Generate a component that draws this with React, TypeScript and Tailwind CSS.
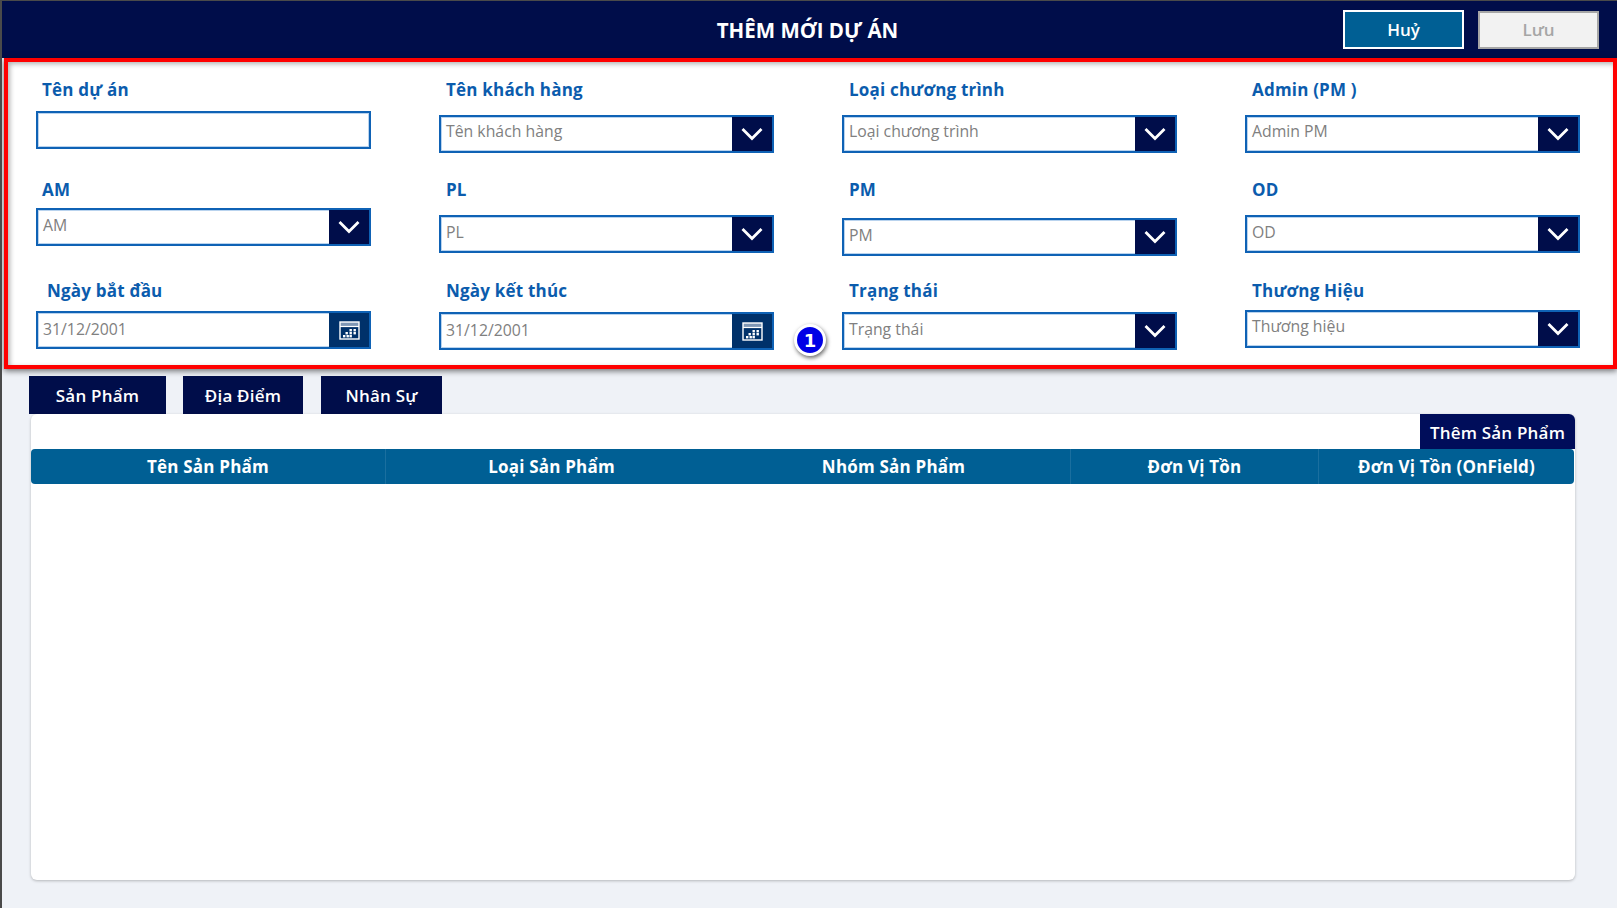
const font = { fontFamily: '"Open Sans", "Noto Sans", sans-serif' };

function Chevron() {
  return (
    <svg width="24" height="16" viewBox="0 0 24 16" fill="none">
      <path d="M2.5 3 L12 12.5 L21.5 3" stroke="white" strokeWidth="2.8" />
    </svg>
  );
}

function Calendar() {
  return (
    <svg width="21" height="19" viewBox="0 0 21 19" fill="none">
      <rect x="1" y="1" width="19" height="4.5" fill="#7f97b5" />
      <rect x="1" y="1" width="19" height="17" stroke="white" strokeWidth="1.4" />
      <path d="M1 5.5 H20" stroke="white" strokeWidth="1.2" />
      <g fill="white">
        <rect x="10.5" y="8" width="2.4" height="2.4" />
        <rect x="14.5" y="8" width="2.4" height="2.4" />
        <rect x="6.5" y="11" width="2.4" height="2.4" />
        <rect x="10.5" y="11" width="2.4" height="2.4" />
        <rect x="14.5" y="11" width="2.4" height="2.4" />
        <rect x="4" y="14" width="2.4" height="2.4" />
        <rect x="7.5" y="14" width="2.4" height="2.4" />
        <rect x="10.5" y="14" width="2.4" height="2.4" />
      </g>
    </svg>
  );
}

function Field({
  label,
  value,
  kind = "select",
  labelClass = "pl-[7px]",
  textClass = "pb-[3px]",
  gapClass,
}: {
  label: string;
  value?: string;
  kind?: "input" | "select" | "date";
  labelClass?: string;
  textClass?: string;
  gapClass: string;
}) {
  return (
    <div className="flex flex-col">
      <div className={`h-6 text-[17px] leading-6 font-bold tracking-[0.2px] text-[#0b5cad] ${labelClass}`}>{label}</div>
      <div className={`flex h-[38px] items-stretch border-2 border-[#0f62b5] bg-white shadow-[inset_0_0_0_1px_#b9d3ee] ${gapClass}`}>
        <div className={`flex min-w-0 flex-1 items-center pl-[5px] text-[15.8px] text-[#808080] ${textClass}`}>{value}</div>
        {kind === "select" && (
          <div className="flex w-10 items-center justify-center bg-[#000d4a]">
            <Chevron />
          </div>
        )}
        {kind === "date" && (
          <div className="flex w-10 items-center justify-center bg-[#00316a]">
            <Calendar />
          </div>
        )}
      </div>
    </div>
  );
}

function Tab({ label, className }: { label: string; className: string }) {
  return (
    <div className={`flex items-center justify-center bg-[#000d4a] pt-[2px] text-[17px] font-semibold tracking-[0.2px] text-white ${className}`}>
      {label}
    </div>
  );
}

const cols = [
  { label: "Tên Sản Phẩm", w: "w-[355px]" },
  { label: "Loại Sản Phẩm", w: "w-[331px]" },
  { label: "Nhóm Sản Phẩm", w: "w-[354px]" },
  { label: "Đơn Vị Tồn", w: "w-[248px]" },
  { label: "Đơn Vị Tồn (OnField)", w: "flex-1" },
];

export default function App() {
  return (
    <div style={font} className="flex h-screen w-screen flex-col overflow-hidden border-t border-l-2 border-[#4a4a4a] bg-[#eff2f7]">
      <header className="grid h-[57px] shrink-0 grid-cols-[1fr_auto_1fr] items-center bg-[#000d4a]">
        <div />
        <div className="pt-[2px] pr-1 text-center text-[20.5px] font-bold text-white">THÊM MỚI DỰ ÁN</div>
        <div className="flex items-center justify-end pr-[18px]">
          <div className="flex h-[39px] w-[121px] items-center justify-center border-2 border-white bg-[#005f94] text-[17px] font-semibold text-white">
            Huỷ
          </div>
          <div className="ml-[14px] flex h-[38px] w-[121px] items-center justify-center border-2 border-[#a6a6a6] bg-[#f2f2f2] text-[17px] font-semibold text-[#a6a6a6]">
            Lưu
          </div>
        </div>
      </header>

      <section className="relative ml-[2px] h-[311px] shrink-0 border-4 border-[#ff0000] bg-white pt-4 pl-7 shadow-[0_2px_6px_rgba(0,0,0,0.55),inset_2px_2px_5px_rgba(0,0,0,0.3)]">
        <div className="grid grid-cols-[repeat(4,335px)] grid-rows-[100px_101px_auto] gap-x-[68px]">
          <Field label="Tên dự án" kind="input" labelClass="pl-[6px]" gapClass="mt-[9px]" />
          <Field label="Tên khách hàng" value="Tên khách hàng" textClass="pb-[5px]" gapClass="mt-[13px]" />
          <Field label="Loại chương trình" value="Loại chương trình" textClass="pb-[5px]" gapClass="mt-[13px]" />
          <Field label="Admin (PM )" value="Admin PM" textClass="pb-[5px]" gapClass="mt-[13px]" />

          <Field label="AM" value="AM" labelClass="pl-[6px]" gapClass="mt-[6px]" />
          <Field label="PL" value="PL" gapClass="mt-[13px]" />
          <Field label="PM" value="PM" gapClass="mt-[16px]" />
          <Field label="OD" value="OD" gapClass="mt-[13px]" />

          <Field label="Ngày bắt đầu" value="31/12/2001" kind="date" labelClass="pl-[11px]" textClass="pb-px" gapClass="mt-2" />
          <Field label="Ngày kết thúc" value="31/12/2001" kind="date" textClass="pb-px" gapClass="mt-[9px]" />
          <Field label="Trạng thái" value="Trạng thái" gapClass="mt-[9px]" />
          <Field label="Thương Hiệu" value="Thương hiệu" textClass="pb-[5px]" gapClass="mt-[7px]" />
        </div>
        <div className="absolute top-[262px] left-[786px] flex h-8 w-8 items-center justify-center rounded-full border-[3px] border-white bg-[#0000e6] font-['DejaVu_Sans'] text-[18px] font-bold text-white shadow-[1px_2px_4px_rgba(0,0,0,0.6)]">
          1
        </div>
      </section>

      <div className="mt-[7px] ml-[27px] flex h-[38px] shrink-0 items-stretch">
        <Tab label="Sản Phẩm" className="w-[137px]" />
        <Tab label="Địa Điểm" className="ml-[17px] w-[120px]" />
        <Tab label="Nhân Sự" className="ml-[18px] w-[121px]" />
      </div>

      <main className="ml-[29px] flex h-[466px] w-[1544px] shrink-0 flex-col rounded-md bg-white shadow-[0_1px_3px_rgba(0,0,0,0.25)]">
        <div className="flex h-[35px] shrink-0 justify-end">
          <div className="flex w-[155px] items-center justify-center rounded-tr-md bg-[#000d5a] pt-[2px] text-[17px] font-semibold tracking-[0.2px] text-white">
            Thêm Sản Phẩm
          </div>
        </div>
        <div className="flex h-[35px] w-[1543px] shrink-0 rounded-t-sm rounded-b-sm bg-[#005f94] text-[17px] font-bold tracking-[0.2px] text-white">
          {cols.map((c, i) => (
            <div
              key={c.label}
              className={`flex items-center justify-center ${c.w} ${i < cols.length - 1 && i !== 1 ? "border-r border-[#1a6f9f]" : ""}`}
            >
              {c.label}
            </div>
          ))}
        </div>
      </main>
    </div>
  );
}
